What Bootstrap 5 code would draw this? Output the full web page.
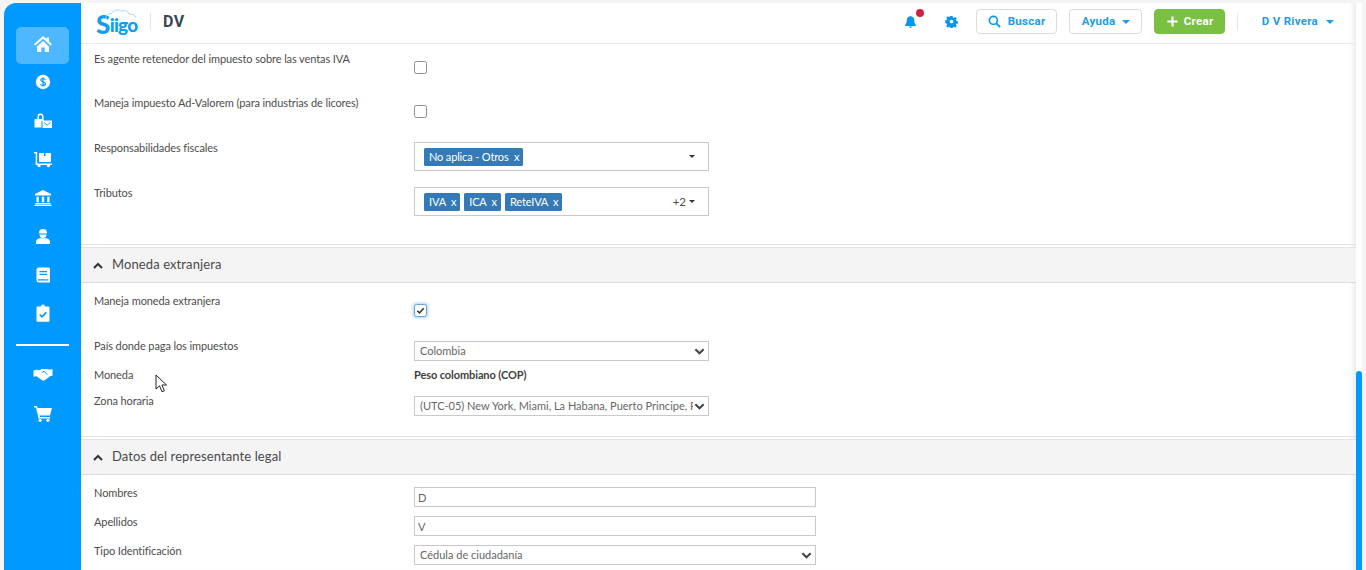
<!DOCTYPE html>
<html lang="es">
<head>
<meta charset="utf-8">
<title>Siigo</title>
<link href="https://cdn.jsdelivr.net/npm/bootstrap@5.3.0/dist/css/bootstrap.min.css" rel="stylesheet">
<style>
html,body{height:570px;overflow:hidden}
body{background:#f4f4f4;font-family:"Lato","Noto Sans",sans-serif;font-size:11px;color:#4a4a4a;position:relative}
.shell{height:570px;padding:3px 0 0 4px}
.rail{width:77px;background:#0099ff;border-top-left-radius:12px;flex:none;padding-top:24px}
.rail-item{width:53px;height:37px;margin:0 auto 1.5px;border-radius:5px;padding-bottom:4px}
.rail-item svg{width:20px;height:20px;fill:#fff}
.rail-item.on{background:#4db8ff}
.rail-sep{width:53px;height:2px;background:#fff;margin:10px auto 12px}
.pane{width:1275px;flex:none;background:#fff;box-shadow:inset -7px 0 6px -5px rgba(0,0,0,.1);overflow:hidden}
.topbar{height:41px;flex:none;border-bottom:1px solid #ececec;padding:0 22px 3px 15px;font-family:"Roboto","Liberation Sans",sans-serif}
.logo-box{width:54px;height:38px}
.logo-word{font-family:"Lato",sans-serif;font-weight:900;font-size:19px;letter-spacing:-.7px;color:#0f9df5;line-height:1;margin-top:11px}
.logo-s{font-size:26px;line-height:20px;vertical-align:-2px}
.logo-cloud{left:9px;top:5px;width:32px;height:12px}
.logo-sep{width:1px;height:17px;background:#e4e4e4;margin:0 12px 0 0}
.co-name{font-weight:700;font-size:16px;color:#3a4655;letter-spacing:.6px}
.tb-ico{width:13px;height:13px;fill:#0a95f0;flex:none}
.bell-wrap{width:13px;height:16px}
.bell-dot{width:8px;height:8px;background:#d21f45;border-radius:50%;top:-5px;right:-7px}
.gear-wrap{margin-left:28px;margin-right:18px}
.tb-btn{height:25px;font-size:11.5px;font-weight:700;color:#1a9bec;border:1px solid #dcdcdc;border-radius:4px;background:#fff;letter-spacing:.3px;padding:0 11px}
.tb-btn:hover{color:#1a9bec;background:#fff;border-color:#dcdcdc}
.tb-find{width:81px;gap:7px}
.tb-help{width:73px;margin-left:12px;padding:0 11px 0 12px}
.tb-green{background:#7ac143;border-color:#7ac143;color:#fff;width:71px;margin-left:12px;gap:5px}
.tb-green:hover{background:#7ac143;border-color:#7ac143;color:#fff}
.tb-caret{width:0;height:0;border:4px solid transparent;border-top-color:#1a9bec;border-bottom:0}
.tb-divider{width:1px;height:17px;background:#e8e8e8;margin:0 24px 0 12px}
.tb-user{padding:0;gap:8px}
.sheet{overflow:hidden}
.frow{display:flex;padding-left:13px}
.frow>label{width:320px;flex:none;line-height:16px;color:#4d4d4d;letter-spacing:-.1px;margin:0}
.r44{height:44px}.r45{height:45px}.r29{height:29px}.r26{height:26px}
.first{padding-top:7px}
.sec-gap1{height:31px;border-bottom:1px solid #e2e2e2}
.sec-gap2{height:15px;border-bottom:1px solid #e2e2e2}
.sec-head{height:36px;margin-top:2px;background:#f4f4f4;border-top:1px solid #e4e4e4;border-bottom:1px solid #dcdcdc;padding-left:12px;font-size:13px;color:#4a4a4a;letter-spacing:.1px;gap:9px}
.sec-head svg{width:10px;height:7px;fill:none;stroke:#333;stroke-width:2}
.sec-body{padding-top:10px}
.o10{margin-top:10px}.o2{margin-top:2px}.o3{margin-top:3px}.o11{margin-top:11px}
.tick{width:13px;height:13px;border:1px solid #8f8f8f;border-radius:2.5px;background:#fff;margin:0;appearance:none;display:block}
.tick.on{border-color:#6aa6d8;box-shadow:0 0 3px 1px rgba(60,150,240,.45);background:#fff url("data:image/svg+xml,%3Csvg xmlns='http://www.w3.org/2000/svg' viewBox='0 0 12 12'%3E%3Cpath d='M2.5 6.2l2.4 2.4 4.6-5' fill='none' stroke='%23333' stroke-width='1.7'/%3E%3C/svg%3E") center/11px no-repeat}
.multi{width:295px;height:29px;border:1px solid #c9c9c9;background:#fff;padding:0 13px 0 9px;font-size:11.5px;gap:4px}
.tag{background:#337ab7;color:#fff;height:18px;line-height:18px;padding:0 4px 0 5px;border-radius:1.5px;font-size:11px;letter-spacing:-.15px}
.multi-caret{width:0;height:0;border:3.5px solid transparent;border-top:3.5px solid #333;border-bottom:0;margin-left:-1px}
.plus-n{color:#4a4a4a;font-size:11.5px}
.fld{width:295px;height:20px;border:1px solid #c9c9c9;border-radius:0;font-size:11px;color:#666;padding:0 15px 0 5px;letter-spacing:0;line-height:18px;min-height:0;
background-size:11px 9px;background-position:right 3px center;
background-image:url("data:image/svg+xml,%3Csvg xmlns='http://www.w3.org/2000/svg' viewBox='0 0 12 9'%3E%3Cpath d='M1.5 2l4.5 4.5L10.500 2' fill='none' stroke='%23444' stroke-width='2.2'/%3E%3C/svg%3E")}
.fld-wide{width:402px}
.fld-text{background-image:none;padding:0 3px}
.val-strong{font-weight:700;color:#3f3f3f;letter-spacing:-.1px;line-height:16px}
.scroll-track{top:3px;right:4px;width:6px;height:567px;background:#fff}
.scroll-thumb{top:368px;left:0;width:6px;height:199px;background:#0099ff;border-radius:3px 3px 0 0}
.mouse{left:155px;top:374px;width:13px;height:20px}
</style>
</head>
<body>
<div class="shell d-flex">
  <nav class="rail">
    <div class="rail-item on d-flex align-items-center justify-content-center"><svg viewBox="0 0 20 20"><path d="M10 2 1 10.200l1.300 1.400L10 4.700l7.700 6.900 1.300-1.400-3-2.700V3.500h-2.500v1.600zM4 12.400V18h4.300v-4.500h3.400V18H16v-5.600L10 7z"/></svg></div>
    <div class="rail-item d-flex align-items-center justify-content-center"><svg viewBox="0 0 20 20"><circle cx="10" cy="10" r="7.200"/><path d="M12.300 7.800c-.2-.9-1.100-1.300-2.300-1.300-1.300 0-2.200.6-2.200 1.600 0 2.300 4.600 1.200 4.600 3.700 0 1-1 1.700-2.400 1.700-1.300 0-2.300-.5-2.500-1.500M10 5.200v9.600" fill="none" stroke="#0099ff" stroke-width="1.200"/></svg></div>
    <div class="rail-item d-flex align-items-center justify-content-center"><svg viewBox="0 0 20 20"><path d="M1.500 8h3V5.500a3 3 0 0 1 6 0V8h0v2H8.500v6.500h-7zM6 8h3V5.500a1.500 1.500 0 0 0-3 0z"/><path d="M9.500 9.500h9.500v7.500H9.500z"/><path d="M11 11.500l3.200 2.600 3.300-2.600" fill="none" stroke="#0099ff" stroke-width=".9"/></svg></div>
    <div class="rail-item d-flex align-items-center justify-content-center"><svg viewBox="0 0 20 20"><path d="M1 3h3.200v11.500H19V16h-2.100a1.600 1.600 0 1 1-3 0H7.600a1.600 1.600 0 1 1-3 0H2.700V4.600H1z"/><path d="M6 4h5v3h1.500V4H18v9H6z"/></svg></div>
    <div class="rail-item d-flex align-items-center justify-content-center"><svg viewBox="0 0 20 20"><path d="M10 2 2 6v1.600h16V6zM3.500 8.800h2.300v5.400H3.500zM8.800 8.800h2.400v5.400H8.800zM14.200 8.800h2.300v5.400h-2.300zM2.500 15h15v1.300h-15zM1.500 16.800h17V18h-17z"/></svg></div>
    <div class="rail-item d-flex align-items-center justify-content-center"><svg viewBox="0 0 20 20"><path d="M6 7a4 4 0 0 1 8 0v.5H6zM6.500 8.500h7a3.500 3.500 0 0 1-7 0z"/><path d="M3 18v-2c0-2.400 2-3.800 4.300-3.800h5.400c2.300 0 4.300 1.400 4.300 3.800v2z"/></svg></div>
    <div class="rail-item d-flex align-items-center justify-content-center"><svg viewBox="0 0 20 20"><path fill-rule="evenodd" d="M6 2.500h9.500A1.500 1.500 0 0 1 17 4v13.500H6A2.500 2.500 0 0 1 3.500 15V5A2.500 2.500 0 0 1 6 2.500zM6.500 6v1.200h7.500V6zm0 2.800V10h7.500V8.800zM5 14.200v1.300H15.500v-1.300z"/></svg></div>
    <div class="rail-item d-flex align-items-center justify-content-center"><svg viewBox="0 0 20 20"><path d="M8 3.500a2 2 0 0 1 4 0h3.500a1 1 0 0 1 1 1V18a.8.8 0 0 1-.8.800H4.300A.8.8 0 0 1 3.500 18V4.500a1 1 0 0 1 1-1z"/><path d="M6.700 11.500l2.300 2.300 4.300-4.500" fill="none" stroke="#0099ff" stroke-width="1.700"/></svg></div>
    <div class="rail-sep"></div>
    <div class="rail-item d-flex align-items-center justify-content-center"><svg viewBox="0 0 20 20"><path d="M.5 6.500 4 5.800l2 .5 3-1.300 2 .2 3-.2 2 .5 3.500-.2v6.400L17.500 12l-5.500 4-2 .8-2-1.200-4.500-3.400L.5 12.800z"/><path d="M8.800 8.500l2.200-1.200 3.300 3.400" fill="none" stroke="#0099ff" stroke-width="1"/></svg></div>
    <div class="rail-item d-flex align-items-center justify-content-center"><svg viewBox="0 0 20 20"><path d="M1 3h3l.6 2H19l-2 7.500H6.500l.3 1.500H17v1.500H5.500L3 4.500H1z"/><circle cx="7" cy="17.300" r="1.600"/><circle cx="15" cy="17.300" r="1.600"/></svg></div>
  </nav>
  <main class="pane d-flex flex-column">
    <header class="topbar d-flex align-items-center">
      <div class="logo-box position-relative">
        <svg class="logo-cloud position-absolute" viewBox="0 0 32 12"><path d="M1 11C1 7 3 5 6 6 8 2 13 1 17 3c3-1 6 0 7 3 3 0 6 1 7 4" fill="none" stroke="#a9d9fa" stroke-width="1"/></svg>
        <div class="logo-word"><span class="logo-s">S</span>iigo</div>
      </div>
      <div class="logo-sep"></div>
      <div class="co-name">DV</div>
      <div class="ms-auto d-flex align-items-center">
        <span class="bell-wrap position-relative d-flex align-items-center justify-content-center"><svg class="tb-ico" viewBox="0 0 14 14"><path d="M7 .7c.5 0 .9.400.9.900A4 4 0 0 1 11 5.500c0 3 .7 4.200 1.800 5.300v1H1.200v-1C2.300 9.700 3 8.500 3 5.500a4 4 0 0 1 3.100-3.900c0-.5.400-.9.900-.9zM5.500 12.500h3a1.500 1.500 0 0 1-3 0z"/></svg><span class="bell-dot position-absolute"></span></span>
        <span class="d-flex gear-wrap"><svg class="tb-ico" viewBox="0 0 14 14"><path fill-rule="evenodd" d="M5.800 1h2.400l.3 1.600 1.100.5 1.400-.9 1.700 1.700-.9 1.400.5 1.100 1.600.3v2.400l-1.600.3-.5 1.100.9 1.400-1.700 1.700-1.400-.9-1.100.5-.3 1.600H5.800l-.3-1.600-1.100-.5-1.400.9-1.700-1.700.9-1.400-.5-1.100L.100 8.200V5.800l1.600-.3.500-1.100-.9-1.400 1.700-1.700 1.400.9 1.100-.5zM7 5a2 2 0 1 0 0 4 2 2 0 0 0 0-4z"/></svg></span>
        <a class="btn tb-btn tb-find d-flex align-items-center" href="#"><svg class="tb-ico" viewBox="0 0 14 14"><circle cx="5.800" cy="5.800" r="4.300" fill="none" stroke="#0a95f0" stroke-width="1.800"/><path d="M9 9l4 4" stroke="#0a95f0" stroke-width="2"/></svg>Buscar</a>
        <a class="btn tb-btn tb-help d-flex align-items-center justify-content-between" href="#">Ayuda<span class="tb-caret"></span></a>
        <a class="btn tb-btn tb-green d-flex align-items-center" href="#"><svg class="tb-ico" viewBox="0 0 14 14"><path d="M7 1.500v11M1.500 7h11" stroke="#fff" stroke-width="2.200"/></svg>Crear</a>
        <span class="tb-divider"></span>
        <a class="tb-btn tb-user border-0 d-flex align-items-center text-decoration-none" href="#">D V Rivera<span class="tb-caret"></span></a>
      </div>
    </header>
    <div class="sheet flex-grow-1">
      <div class="first">
        <div class="frow r44"><label>Es agente retenedor del impuesto sobre las ventas IVA</label><div class="o10"><input class="tick" type="checkbox"></div></div>
        <div class="frow r45"><label>Maneja impuesto Ad-Valorem (para industrias de licores)</label><div class="o10"><input class="tick" type="checkbox"></div></div>
        <div class="frow r45"><label>Responsabilidades fiscales</label><div class="o2 multi d-flex align-items-center"><span class="tag">No aplica - Otros&nbsp; x</span><span class="multi-caret ms-auto"></span></div></div>
        <div class="frow r29"><label>Tributos</label><div class="o2 multi d-flex align-items-center"><span class="tag">IVA&nbsp; x</span><span class="tag">ICA&nbsp; x</span><span class="tag">ReteIVA&nbsp; x</span><span class="plus-n ms-auto">+2</span><span class="multi-caret"></span></div></div>
      </div>
      <div class="sec-gap1"></div>
      <div class="sec-head d-flex align-items-center"><svg viewBox="0 0 10 7"><path d="M1 6l4-4 4 4"/></svg>Moneda extranjera</div>
      <div class="sec-body">
        <div class="frow r45"><label>Maneja moneda extranjera</label><div class="o11"><input class="tick on" type="checkbox" checked></div></div>
        <div class="frow r29"><label>País donde paga los impuestos</label><div class="o3"><select class="form-select fld"><option>Colombia</option></select></div></div>
        <div class="frow r26"><label>Moneda</label><div class="val-strong">Peso colombiano (COP)</div></div>
        <div class="frow r29"><label>Zona horaria</label><div class="o3"><select class="form-select fld"><option>(UTC-05) New York, Miami, La Habana, Puerto Principe, Panamá</option></select></div></div>
      </div>
      <div class="sec-gap2"></div>
      <div class="sec-head d-flex align-items-center"><svg viewBox="0 0 10 7"><path d="M1 6l4-4 4 4"/></svg>Datos del representante legal</div>
      <div class="sec-body">
        <div class="frow r29"><label>Nombres</label><div class="o2"><input class="form-control fld fld-wide fld-text" value="D"></div></div>
        <div class="frow r29"><label>Apellidos</label><div class="o2"><input class="form-control fld fld-wide fld-text" value="V"></div></div>
        <div class="frow r29"><label>Tipo Identificación</label><div class="o2"><select class="form-select fld fld-wide"><option>Cédula de ciudadanía</option></select></div></div>
      </div>
    </div>
  </main>
</div>
<div class="scroll-track position-absolute"><div class="scroll-thumb position-absolute"></div></div>
<svg class="mouse position-absolute" viewBox="0 0 13 20"><path d="M1 1v14l3.500-3.200 2.500 6 2.400-1-2.500-5.800h4.600z" fill="#fff" stroke="#222" stroke-width="1"/></svg>
</body>
</html>
